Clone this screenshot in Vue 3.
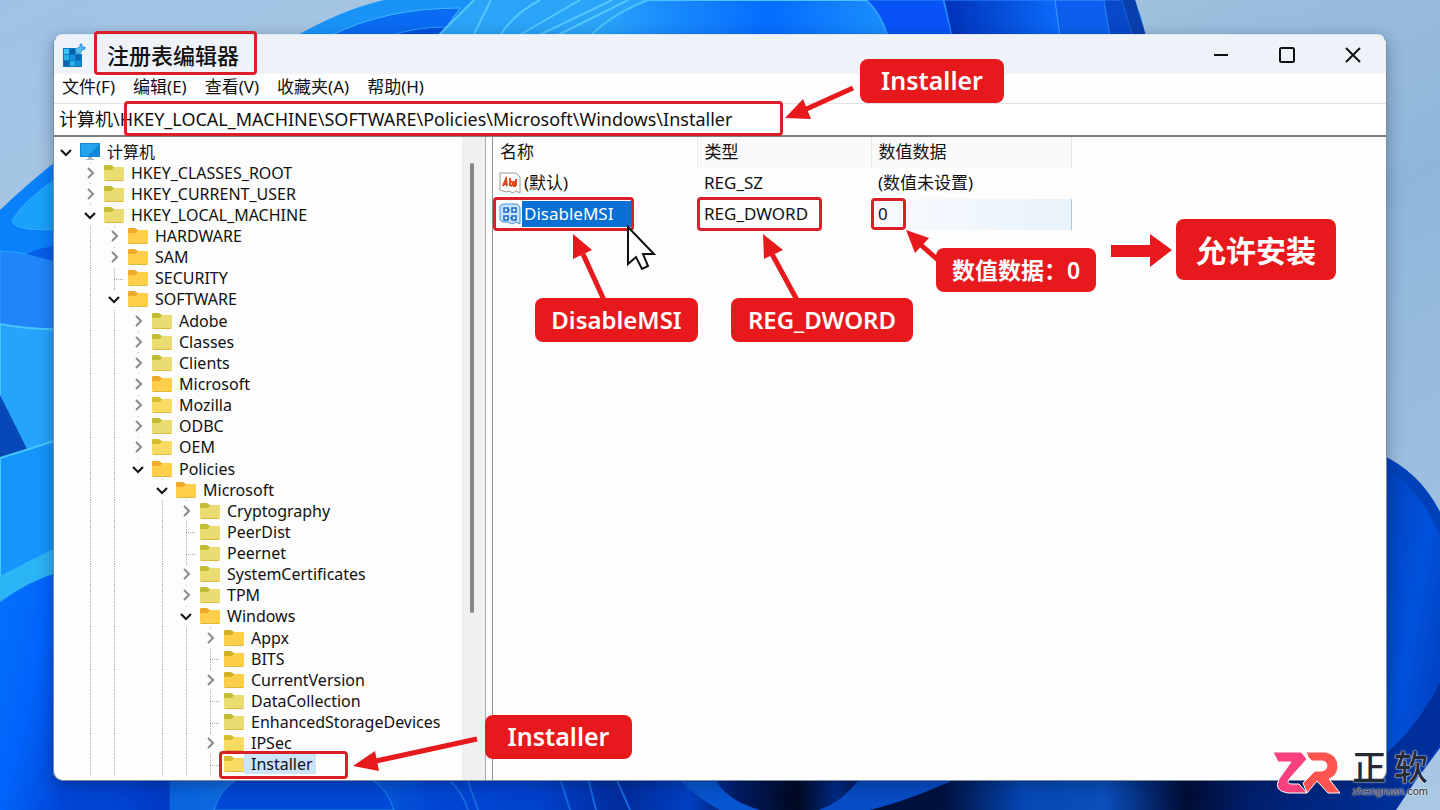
<script setup>
import { ref } from 'vue'

const menus = ['文件(F)', '编辑(E)', '查看(V)', '收藏夹(A)', '帮助(H)']
const address = ref('计算机\\HKEY_LOCAL_MACHINE\\SOFTWARE\\Policies\\Microsoft\\Windows\\Installer')

// state: open | closed | leaf, tone: folder colour
const nodes = [
  { name: '计算机', level: 0, state: 'open', tone: 'pc' },
  { name: 'HKEY_CLASSES_ROOT', level: 1, state: 'closed', tone: 'olive' },
  { name: 'HKEY_CURRENT_USER', level: 1, state: 'closed', tone: 'olive' },
  { name: 'HKEY_LOCAL_MACHINE', level: 1, state: 'open', tone: 'olive' },
  { name: 'HARDWARE', level: 2, state: 'closed', tone: 'amber' },
  { name: 'SAM', level: 2, state: 'closed', tone: 'amber' },
  { name: 'SECURITY', level: 2, state: 'leaf', tone: 'amber' },
  { name: 'SOFTWARE', level: 2, state: 'open', tone: 'amber' },
  { name: 'Adobe', level: 3, state: 'closed', tone: 'olive' },
  { name: 'Classes', level: 3, state: 'closed', tone: 'olive' },
  { name: 'Clients', level: 3, state: 'closed', tone: 'olive' },
  { name: 'Microsoft', level: 3, state: 'closed', tone: 'amber' },
  { name: 'Mozilla', level: 3, state: 'closed', tone: 'yellow' },
  { name: 'ODBC', level: 3, state: 'closed', tone: 'olive' },
  { name: 'OEM', level: 3, state: 'closed', tone: 'yellow' },
  { name: 'Policies', level: 3, state: 'open', tone: 'amber' },
  { name: 'Microsoft', level: 4, state: 'open', tone: 'amber' },
  { name: 'Cryptography', level: 5, state: 'closed', tone: 'olive' },
  { name: 'PeerDist', level: 5, state: 'leaf', tone: 'olive' },
  { name: 'Peernet', level: 5, state: 'leaf', tone: 'olive' },
  { name: 'SystemCertificates', level: 5, state: 'closed', tone: 'olive' },
  { name: 'TPM', level: 5, state: 'closed', tone: 'olive' },
  { name: 'Windows', level: 5, state: 'open', tone: 'amber' },
  { name: 'Appx', level: 6, state: 'closed', tone: 'mixed' },
  { name: 'BITS', level: 6, state: 'leaf', tone: 'mixed' },
  { name: 'CurrentVersion', level: 6, state: 'closed', tone: 'mixed' },
  { name: 'DataCollection', level: 6, state: 'leaf', tone: 'olive' },
  { name: 'EnhancedStorageDevices', level: 6, state: 'leaf', tone: 'olive' },
  { name: 'IPSec', level: 6, state: 'closed', tone: 'yellow' },
  { name: 'Installer', level: 6, state: 'leaf', tone: 'yellow', selected: true }
]

// Policies is the last child of SOFTWARE, so its column has no line below it
const hasLine = (column) => column !== 1 && column !== 4
</script>

<template>
  <div class="desktop">
    <svg class="wallpaper" viewBox="0 0 1440 810" preserveAspectRatio="none" aria-hidden="true">
      <defs>
        <linearGradient id="sky" x1="0" y1="0" x2="1" y2="1">
          <stop offset="0" stop-color="#9fc3e6" />
          <stop offset=".25" stop-color="#aac6e0" />
          <stop offset=".6" stop-color="#8fb6da" />
          <stop offset="1" stop-color="#a9c8e4" />
        </linearGradient>
        <linearGradient id="leftBase" x1="0" y1="0" x2="0" y2="1">
          <stop offset="0" stop-color="#0a80fa" />
          <stop offset=".5" stop-color="#0a84fb" />
          <stop offset="1" stop-color="#0060fc" />
        </linearGradient>
        <linearGradient id="leftLow" x1="0" y1="0" x2="1" y2="1">
          <stop offset="0" stop-color="#0472fd" />
          <stop offset=".5" stop-color="#0064fb" />
          <stop offset="1" stop-color="#0046d6" />
        </linearGradient>
        <linearGradient id="topBig" x1="0" y1="0" x2="1" y2="0">
          <stop offset="0" stop-color="#2ba9fb" />
          <stop offset=".25" stop-color="#1a8dfd" />
          <stop offset=".6" stop-color="#046dff" />
          <stop offset="1" stop-color="#1b8ffd" />
        </linearGradient>
        <linearGradient id="topDark" x1="0" y1="0" x2="1" y2="0">
          <stop offset="0" stop-color="#0031b8" />
          <stop offset="1" stop-color="#0b6cfb" />
        </linearGradient>
        <linearGradient id="floor" x1="0" y1="0" x2="1" y2="0">
          <stop offset="0" stop-color="#0046d6" />
          <stop offset=".05" stop-color="#0042d0" />
          <stop offset=".082" stop-color="#0039c4" />
          <stop offset=".083" stop-color="#0a63de" />
          <stop offset=".17" stop-color="#1173e0" />
          <stop offset=".28" stop-color="#0046d4" />
          <stop offset=".36" stop-color="#0041cc" />
          <stop offset=".42" stop-color="#002c9c" />
          <stop offset=".47" stop-color="#0040c2" />
          <stop offset=".505" stop-color="#001c66" />
          <stop offset=".55" stop-color="#00081e" />
          <stop offset=".58" stop-color="#002a86" />
          <stop offset=".6" stop-color="#000f3c" />
          <stop offset=".66" stop-color="#00123f" />
          <stop offset=".72" stop-color="#0548b6" />
          <stop offset=".78" stop-color="#0a4fbc" />
          <stop offset=".84" stop-color="#000c34" />
          <stop offset=".89" stop-color="#00206e" />
          <stop offset="1" stop-color="#00309a" />
        </linearGradient>
        <linearGradient id="rightPetal" x1="0" y1="0" x2="1" y2="1">
          <stop offset="0" stop-color="#003fb8" />
          <stop offset=".5" stop-color="#0052dc" />
          <stop offset="1" stop-color="#0038b4" />
        </linearGradient>
      </defs>
      <rect width="1440" height="810" fill="url(#sky)" />

      <!-- top petals -->
      <path d="M296 36C325 20 350 8 384 0H1135Q1142 18 1146 36Z" fill="#1a93f8" />
      <path d="M330 36Q385 8 460 8L440 36Z" fill="#0a6cf2" stroke="#3fb8ff" />
      <path d="M390 36Q415 27 446 27L440 36Z" fill="#0052df" stroke="#2f9eff" />
      <path d="M438 36L474 0H660L600 36Z" fill="#2aa4f6" />
      <g fill="none" stroke="#55c6ff" stroke-width="2">
        <path d="M438 36L474 0M473 36L491 0M500 36Q512 15 540 0M518 36L580 0M537 36L612 0M556 36L628 0" />
      </g>
      <path d="M590 36Q612 14 648 0H867Q882 14 888 36Z" fill="url(#topBig)" stroke="#4cc2ff" stroke-width="2" />
      <path d="M888 36Q882 14 867 0H943L952 36Z" fill="#0753f6" stroke="#258cff" />
      <path d="M952 36L944 0H1055L1060 36Z" fill="url(#topDark)" stroke="#2a8dff" />
      <path d="M1060 36L1055 0H1104L1110 36Z" fill="#0c5fee" stroke="#3c98fa" />
      <path d="M1110 36L1104 0H1122L1133 36Z" fill="#0848ca" stroke="#287ce8" />
      <path d="M1133 36L1122 0H1135L1146 36Z" fill="#0a3fae" />

      <!-- left petals -->
      <path d="M0 210Q26 185 60 158V810H0Z" fill="url(#leftBase)" />
      <path d="M60 176Q18 205 12 222Q18 232 60 229Z" fill="#1aa2fb" stroke="#2ab0ff" />
      <path d="M0 251Q30 252 60 264V330H0Z" fill="#2085f8" stroke="#23a4fb" />
      <path d="M26 254Q38 248 60 245V263Z" fill="#075fe8" />
      <path d="M0 324Q30 330 60 329V445L0 458Z" fill="#24a4fb" stroke="#47c6fc" stroke-width="2" />
      <path d="M0 395L27 449L0 458Z" fill="#0748b8" />
      <path d="M0 458Q30 449 60 439V560L0 580Z" fill="#1496fb" stroke="#45c7fc" stroke-width="2" />
      <path d="M0 576Q30 560 60 546V580Q20 586 0 604Z" fill="#2bb4f6" />
      <path d="M0 602Q30 580 60 572V810H0Z" fill="url(#leftLow)" />

      <!-- right petal -->
      <path d="M1380 458Q1420 478 1440 512V748L1394 810H1380Z" fill="url(#rightPetal)" />
      <path d="M1380 454Q1420 472 1440 512V536Q1415 480 1380 466Z" fill="#0040b8" />
      <path d="M1440 682Q1420 724 1380 760V810H1396L1440 744Z" fill="#002f9c" />

      <!-- strip under the window -->
      <path d="M59 778H1400V800L1394 810H59Z" fill="url(#floor)" />
      <path d="M214 810Q220 788 240 778H370Q388 790 394 810Z" fill="#0048d6" stroke="#218ae8" />
      <path d="M448 778Q464 795 468 810M467 778L478 810M560 778L570 810M588 778L596 810M616 778L630 810" fill="none" stroke="#1668e0" stroke-width="2" />
      <path d="M677 778Q700 800 720 810H760Q725 800 715 778Z" fill="#0756d0" />
      <path d="M860 778Q840 804 818 810H870Q910 800 958 778Z" fill="#074cc4" />
    </svg>

    <main class="window">
      <header class="titlebar">
        <svg class="app-icon" viewBox="0 0 24 24" aria-hidden="true">
          <path d="M1 5H14V11H20V24H1Z" fill="#0878c8" />
          <path d="M2 6H7V11H2Z" fill="#3ac4f0" />
          <path d="M8 6H13V11H8Z" fill="#0a5da8" />
          <path d="M2 12H7V17H2ZM8 18H13V23H8Z" fill="#29b0e6" />
          <path d="M8 12H13V17H8ZM14 18H19V23H14Z" fill="#1690d8" />
          <path d="M14 12H19V17H14ZM2 18H7V23H2Z" fill="#0c64b0" />
          <path d="M13 6L18 4L18 1L20 1L20 4L23 4L23 6L20 7L18 11L14 10Z" fill="#52bdf0" stroke="#1d80c8" stroke-width=".7" />
        </svg>
        <h1>注册表编辑器</h1>
        <div class="window-buttons">
          <button aria-label="最小化">
            <svg viewBox="0 0 16 16"><path d="M1 8H15" /></svg>
          </button>
          <button aria-label="最大化">
            <svg viewBox="0 0 16 16"><rect x="1" y="1" width="14" height="14" rx="1.5" /></svg>
          </button>
          <button aria-label="关闭">
            <svg viewBox="0 0 16 16"><path d="M1 1L15 15M15 1L1 15" /></svg>
          </button>
        </div>
      </header>

      <nav class="menubar">
        <button v-for="menu in menus" :key="menu">{{ menu }}</button>
      </nav>

      <input v-model="address" class="address" type="text" aria-label="地址" />

      <div class="panes">
        <div class="tree-pane">
          <ul class="tree">
            <li v-for="(node, i) in nodes" :key="i" class="node">
              <span v-for="n in node.level" :key="n" class="guide" :class="{ line: hasLine(n) }"></span>
              <span v-if="node.state === 'leaf'" class="branch"></span>
              <button v-else class="toggle" :class="[node.state, { root: node.level < 1 }]" :aria-label="node.name">
                <svg viewBox="0 0 14 14">
                  <path :d="node.state === 'open' ? 'M2 5L7 10L12 5' : 'M5 2L10 7L5 12'" />
                </svg>
              </button>
              <svg v-if="node.tone === 'pc'" class="icon" viewBox="0 0 20 18" aria-hidden="true">
                <path d="M0 0H20V14H0Z" fill="#1187d8" />
                <path d="M1 1H19L8 13H1Z" fill="#22a5ea" />
                <path d="M8 14H12V16H14V17H6V16H8Z" fill="#a9b8c4" />
              </svg>
              <svg v-else class="icon" :class="node.tone" viewBox="0 0 20 18" aria-hidden="true">
                <path class="tab" d="M0 2Q0 1 1 1H7L10 3V6H0Z" />
                <path class="front" d="M0 6H8L10 3H19Q20 3 20 4V16Q20 17 19 17H1Q0 17 0 16Z" />
                <path class="edge" d="M1 16H19V17H1Z" />
              </svg>
              <span class="label" :class="{ selected: node.selected }">{{ node.name }}</span>
            </li>
          </ul>
          <div class="scrollbar"><div class="thumb"></div></div>
        </div>

        <div class="values">
          <table>
            <thead>
              <tr>
                <th class="col-name">名称</th>
                <th class="col-type">类型</th>
                <th class="col-data">数值数据</th>
              </tr>
            </thead>
            <tbody>
              <tr>
                <td>
                  <div class="value-name">
                    <svg viewBox="0 0 22 22" aria-hidden="true">
                      <path d="M1 1H17L21 5V21L17 19L14 21L10 19L7 20L1 18Z" fill="#fff" stroke="#999" />
                      <path d="M4 14L7 7L8 14M5 12H8M11 6V14M11 10Q14 9 14 12Q13 15 11 13M17 7V14M17 10H15V14H17" fill="none" stroke="#e04a20" stroke-width="2" />
                    </svg>
                    <span>(默认)</span>
                  </div>
                </td>
                <td>REG_SZ</td>
                <td>(数值未设置)</td>
              </tr>
              <tr class="current">
                <td>
                  <div class="value-name">
                    <svg viewBox="0 0 22 22" aria-hidden="true">
                      <path d="M1 3L4 1H18L21 4V21L17 19L13 21L9 19H4L1 17Z" fill="#c9e4fa" stroke="#3b8fdc" />
                      <path d="M5 5H9V9H5ZM13 5H17V9H13ZM5 13H9V17H5ZM13 13H17V17H13ZM9 7H11M11 15H13" fill="#e6f3fd" stroke="#1c6cc8" stroke-width="1.6" />
                    </svg>
                    <span class="marked">DisableMSI</span>
                  </div>
                </td>
                <td>REG_DWORD</td>
                <td>0</td>
              </tr>
            </tbody>
          </table>
        </div>
      </div>
    </main>

    <!-- tutorial marks over the window -->
    <div class="frame frame-title"></div>
    <div class="frame frame-address"></div>
    <div class="frame frame-name"></div>
    <div class="frame frame-type"></div>
    <div class="frame frame-data"></div>
    <div class="frame frame-key"></div>

    <svg class="arrows" width="1440" height="810" viewBox="0 0 1440 810" aria-hidden="true">
      <g stroke="#e7191d" stroke-width="5" fill="none">
        <path d="M853 88L802 111M604 300L583 254M797 300L772 254M938 260L921 245M477 739L376 761" />
      </g>
      <g fill="#e7191d">
        <path d="M785 118L803 99L811 119Z" />
        <path d="M573 234L592 250L573 259Z" />
        <path d="M763 234L783 250L764 259Z" />
        <path d="M906 230L929 238L915 253Z" />
        <path d="M353 766L375 751L379 771Z" />
        <path d="M1111 245H1150V234L1172 250L1150 267V257H1111Z" />
      </g>
      <path d="M628 227V264L636 257L642 269L648 266L643 254H654Z" fill="#fff" stroke="#111" stroke-width="2" />
    </svg>

    <div class="callout callout-address">Installer</div>
    <div class="callout callout-name">DisableMSI</div>
    <div class="callout callout-type">REG_DWORD</div>
    <div class="callout callout-data">数值数据：0</div>
    <div class="callout callout-result">允许安装</div>
    <div class="callout callout-key">Installer</div>

    <div class="brand">
      <svg viewBox="0 0 68 44" aria-hidden="true">
        <g stroke="#fff" stroke-width="1">
          <path d="M1 1H29L35 8L18 27Q13 33 20 33H27L35 42H16Q1 40 7 28L19 11H6Z" fill="#f8407c" />
          <path d="M34 1H54Q66 4 66 16Q65 25 57 28L68 42H56L45 30L35 42L31 32L43 20H50Q55 19 55 14Q54 10 50 10H40L36 6Z" fill="#ff5350" />
        </g>
      </svg>
      <div class="brand-text">
        <strong><span>正</span><span>软</span></strong>
        <small>zhengruan.com</small>
      </div>
    </div>
  </div>
</template>

<style>
body {
  margin: 0;
}
</style>

<style scoped>
.desktop {
  position: relative;
  display: flex;
  box-sizing: border-box;
  height: 100vh;
  min-height: 810px;
  padding: 34px 53px 29px;
  overflow: hidden;
  color: #111;
  font-family: 'Noto Sans', 'Noto Sans CJK SC', sans-serif;
  font-size: 17px;
}

.wallpaper {
  position: absolute;
  top: 0;
  left: 0;
  width: 100%;
  height: 100%;
}

button {
  padding: 0;
  border: 0;
  background: none;
  color: inherit;
  font: inherit;
}

.window {
  position: relative;
  display: flex;
  flex: 1;
  flex-direction: column;
  box-sizing: border-box;
  min-width: 0;
  overflow: hidden;
  border: 1px solid #7d8b9b;
  border-top-color: #dfe7f0;
  border-radius: 10px;
  background: #fdfdfd;
  box-shadow: 0 4px 16px rgba(0, 20, 60, .35);
}

.titlebar {
  display: flex;
  align-items: center;
  height: 39px;
  padding-left: 8px;
  background: #eff3f9;
}

.app-icon {
  width: 24px;
  height: 24px;
}

h1 {
  flex: 1;
  margin: 0 0 0 21px;
  font-size: 22px;
  font-weight: 500;
  line-height: 32px;
}

.window-buttons {
  display: flex;
}

.window-buttons button {
  display: flex;
  align-items: center;
  justify-content: center;
  width: 66px;
  height: 38px;
}

.window-buttons svg {
  width: 16px;
  height: 16px;
  fill: none;
  stroke: #111;
  stroke-width: 2;
}

.menubar {
  display: flex;
  align-items: flex-start;
  gap: 18px;
  height: 29px;
  padding-left: 8px;
  border-bottom: 1px solid #e2e2e2;
  line-height: 26px;
}

.address {
  height: 31px;
  box-sizing: border-box;
  padding: 0 5px 3px;
  border: 0;
  background: #fff;
  color: inherit;
  font: inherit;
  font-size: 18px;
}

.panes {
  display: flex;
  flex: 1;
  min-height: 0;
  border-top: 2px solid #7b7f82;
}

.tree-pane {
  display: flex;
  width: 431px;
  border-right: 1px solid #a9adb3;
  font-size: 16px;
}

.tree {
  display: grid;
  flex: 1;
  grid-auto-rows: 1fr;
  margin: 0;
  padding: 4px 0 5px;
  list-style: none;
}

.node {
  display: flex;
  min-height: 0;
  align-items: center;
}

.guide {
  align-self: stretch;
  width: 24px;
}

.guide.line {
  background: repeating-linear-gradient(#aaa 0 1px, transparent 1px 2px) 12px 0 / 1px 100% no-repeat;
}

.guide:first-child {
  background: none;
}

.branch {
  align-self: stretch;
  width: 24px;
  background:
    repeating-linear-gradient(#aaa 0 1px, transparent 1px 2px) 12px 0 / 1px 100% no-repeat,
    repeating-linear-gradient(90deg, #aaa 0 1px, transparent 1px 2px) 12px 11px / 9px 1px no-repeat;
}

.toggle {
  display: flex;
  align-self: stretch;
  align-items: center;
  justify-content: center;
  width: 24px;
  background: linear-gradient(#bbb, #bbb) 12px 0 / 1px 1px no-repeat;
}

.toggle.root {
  background: none;
}

.toggle svg {
  width: 14px;
  height: 14px;
  fill: none;
  stroke: #8a8a8a;
  stroke-width: 2;
}

.toggle.open svg {
  stroke: #111;
}

.icon {
  width: 20px;
  height: 18px;
  margin-left: 2px;
}

.olive .tab {
  fill: #c3bd34;
}

.olive .front {
  fill: #ebdc72;
}

.yellow .tab {
  fill: #d8bd30;
}

.yellow .front {
  fill: #f8dc62;
}

.mixed .tab {
  fill: #d2b024;
}

.mixed .front {
  fill: #fdce4a;
}

.amber .tab {
  fill: #efaa2c;
}

.amber .front {
  fill: #ffce4b;
}

.edge {
  fill: #d9b93e;
}

.label {
  padding: 0 3px 0 7px;
  line-height: 20px;
  white-space: nowrap;
}

.label.selected {
  background: #cce4f8;
}

.scrollbar {
  width: 23px;
  background: #f0f0f0;
}

.thumb {
  width: 4px;
  height: 70%;
  margin: 26px 0 0 8px;
  border-radius: 2px;
  background: #868686;
}

.values {
  flex: 1;
  margin-left: 6px;
  border-left: 1px solid #8d9299;
}

table {
  border-collapse: collapse;
  table-layout: fixed;
  width: 579px;
}

th,
td {
  box-sizing: border-box;
  height: 31px;
  padding: 0 0 2px 7px;
  font-weight: 400;
  line-height: 24px;
  text-align: left;
}

.col-name {
  width: 204px;
}

.col-type {
  width: 174px;
  border-left: 1px solid #e8e8e8;
  background: #fafafa;
}

.col-data {
  border-right: 1px solid #e3e6ea;
  border-left: 1px solid #e8e8e8;
  background: #fafafa;
}

.current td:last-child {
  border-right: 1px solid #a9cdea;
  background: linear-gradient(90deg, #f8fbfe, #e8f3fc);
}

.value-name {
  display: flex;
  align-items: center;
}

.value-name svg {
  width: 22px;
  height: 22px;
  margin-left: -1px;
}

.value-name span {
  flex: 1;
  margin-left: 1px;
  padding: 1px 2px;
}

.value-name .marked {
  margin-right: 65px;
  background: #0670d4;
  color: #fff;
}

/* red rectangles */
.frame {
  position: absolute;
  box-sizing: border-box;
  border: 3px solid #dc1f26;
  border-radius: 4px;
}

.frame-title {
  top: 31px;
  left: 94px;
  width: 163px;
  height: 44px;
}

.frame-address {
  top: 101px;
  left: 124px;
  width: 659px;
  height: 35px;
}

.frame-name {
  top: 197px;
  left: 493px;
  width: 141px;
  height: 34px;
}

.frame-type {
  top: 197px;
  left: 697px;
  width: 125px;
  height: 34px;
}

.frame-data {
  top: 198px;
  left: 871px;
  width: 35px;
  height: 32px;
}

.frame-key {
  top: 751px;
  left: 219px;
  width: 129px;
  height: 28px;
}

.arrows {
  position: absolute;
  top: 0;
  left: 0;
}

.callout {
  position: absolute;
  display: flex;
  align-items: center;
  justify-content: center;
  box-sizing: border-box;
  height: 44px;
  padding-bottom: 2px;
  border-radius: 8px;
  background: #e7191d;
  color: #fff;
  font-size: 25px;
  font-weight: 600;
  white-space: nowrap;
}

.callout-address {
  top: 59px;
  left: 860px;
  width: 144px;
}

.callout-name {
  top: 298px;
  left: 535px;
  width: 163px;
  font-size: 24px;
}

.callout-type {
  top: 298px;
  left: 731px;
  width: 182px;
  font-size: 24px;
}

.callout-data {
  top: 248px;
  left: 936px;
  width: 160px;
  font-size: 23px;
}

.callout-result {
  top: 219px;
  left: 1176px;
  width: 160px;
  height: 61px;
  font-size: 30px;
}

.callout-key {
  top: 715px;
  left: 485px;
  width: 147px;
}

.brand {
  position: absolute;
  right: 12px;
  bottom: 12px;
  display: flex;
  gap: 12px;
  color: #252b35;
  font-family: 'Liberation Sans', 'Noto Sans CJK SC', sans-serif;
  text-shadow: 0 0 1px #fff, 0 0 2px #fff;
}

.brand svg {
  width: 68px;
  height: 44px;
}

.brand-text {
  display: flex;
  flex-direction: column;
}

.brand strong {
  display: flex;
  justify-content: space-between;
  font-size: 34px;
  font-weight: 500;
  line-height: 34px;
}

.brand small {
  font-size: 11px;
  line-height: 13px;
}
</style>
